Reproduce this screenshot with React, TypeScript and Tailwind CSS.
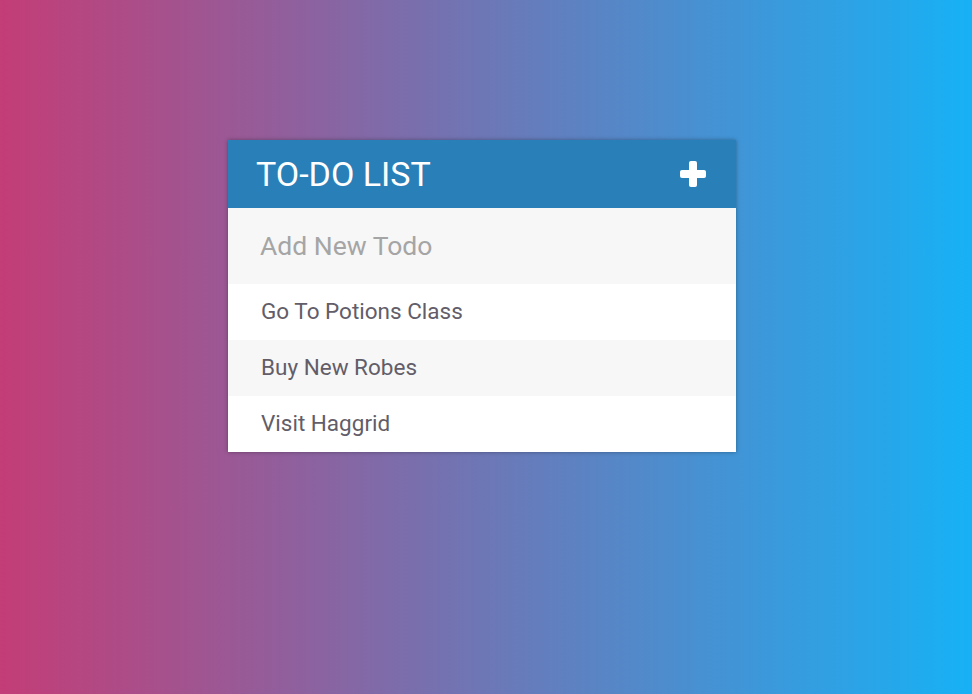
export default function App() {
  const todos = ['Go To Potions Class', 'Buy New Robes', 'Visit Haggrid'];

  return (
    <main
      className="min-h-screen w-full bg-[linear-gradient(to_right,#c33d77,#17b1f5)] pt-[140px]"
      style={{ fontFamily: 'Roboto, "Liberation Sans", sans-serif' }}
    >
      <div className="ml-[228px] w-[508px] bg-[#f7f7f7] shadow-[0_0_4px_rgba(0,0,0,0.35)]">
        <div className="flex h-[68px] items-center justify-between bg-[#2980b9] pl-[28px] pr-[29px]">
          <h1 className="text-[34px] font-normal leading-none text-white">TO-DO LIST</h1>
          <svg width="28" height="28" viewBox="0 0 28 28" className="mt-[-1px]">
            <rect x="10" y="1" width="8" height="26" rx="2" fill="white" />
            <rect x="1" y="10" width="26" height="8" rx="2" fill="white" />
          </svg>
        </div>
        <div className="flex h-[76px] items-center bg-[#f7f7f7] pl-[32px]">
          <input
            className="w-full bg-transparent text-[26.5px] text-[#555] outline-none placeholder:text-[#a5a5a5]"
            placeholder="Add New Todo"
          />
        </div>
        <ul>
          {todos.map((t, i) => (
            <li
              key={t}
              className={`flex h-[56px] items-center pl-[33px] text-[22.5px] text-[#625d68] ${
                i % 2 === 0 ? 'bg-white' : 'bg-[#f7f7f7]'
              }`}
            >
              {t}
            </li>
          ))}
        </ul>
      </div>
    </main>
  );
}
